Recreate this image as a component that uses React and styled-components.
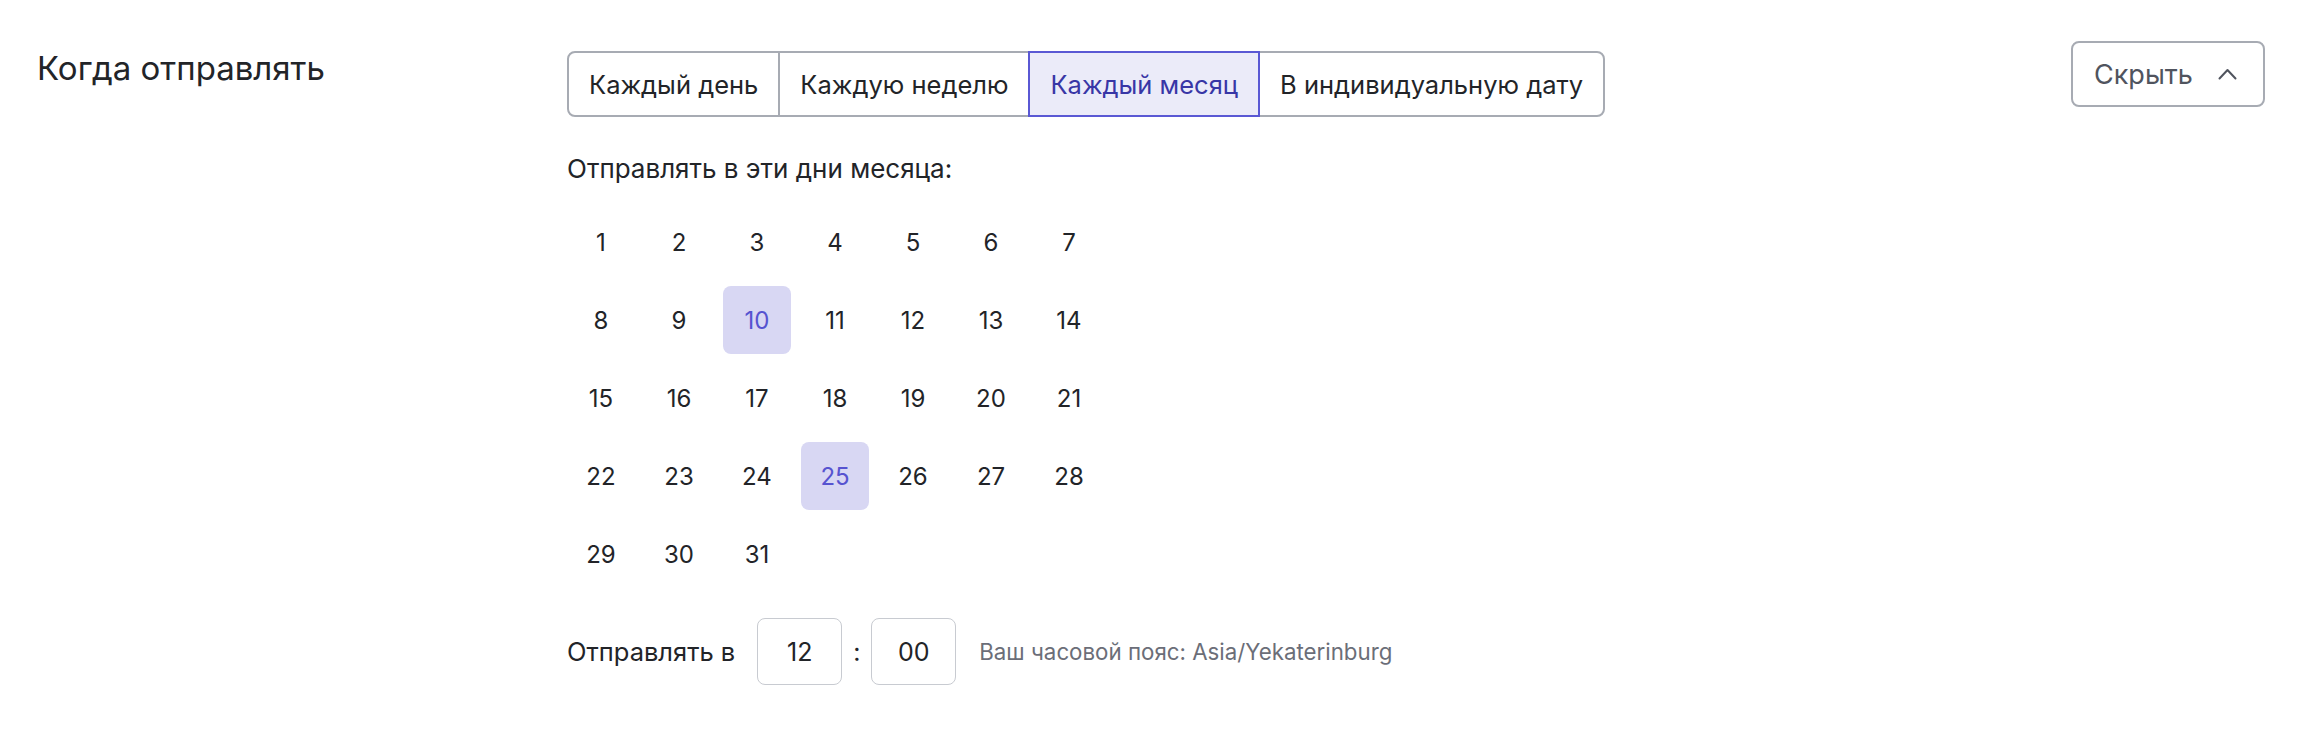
import React, { useState } from "react";
import styled, { createGlobalStyle } from "styled-components";

const GlobalStyle = createGlobalStyle`
  html, body {
    margin: 0;
    padding: 0;
    background: #ffffff;
  }
  body {
    font-family: Inter, "Noto Sans", "Liberation Sans", sans-serif;
    color: #212226;
  }
  * { box-sizing: border-box; }
`;

const Page = styled.div`
  display: flex;
  align-items: flex-start;
  padding: 41px 39px 40px 37px;
  width: 2304px;
`;

const SectionTitle = styled.div`
  width: 530px;
  flex: none;
  margin-top: 9px;
  font-size: 33px;
  line-height: 36px;
  font-weight: 400;
  color: #222428;
`;

const Content = styled.div`
  flex: 1;
  margin-top: 10px;
  display: flex;
  flex-direction: column;
  align-items: flex-start;
`;

const Segmented = styled.div`
  display: flex;
  height: 66px;
`;

const Segment = styled.button`
  position: relative;
  z-index: ${(p) => (p.$active ? 1 : 0)};
  height: 100%;
  margin-left: ${(p) => (p.$first ? "0" : "-2px")};
  padding: 0 20px;
  border: 2px solid ${(p) => (p.$active ? "#5a58d4" : "#a7abb3")};
  border-radius: ${(p) =>
    p.$first ? "8px 0 0 8px" : p.$last ? "0 8px 8px 0" : "0"};
  background: ${(p) => (p.$active ? "#ebebf9" : "#ffffff")};
  color: ${(p) => (p.$active ? "#3836a6" : "#222428")};
  font-family: inherit;
  font-size: 25.5px;
  white-space: nowrap;
  cursor: pointer;
`;

const HintLabel = styled.div`
  margin-top: 34px;
  font-size: 26px;
  line-height: 36px;
  color: #222428;
`;

const DayGrid = styled.div`
  margin-top: 21px;
  display: grid;
  grid-template-columns: repeat(7, 68px);
  grid-auto-rows: 68px;
  gap: 10px;
`;

const Day = styled.div`
  display: flex;
  align-items: center;
  justify-content: center;
  border-radius: 8px;
  font-size: 24px;
  background: ${(p) => (p.$selected ? "#d8d7f3" : "transparent")};
  color: ${(p) => (p.$selected ? "#5653d0" : "#222428")};
  cursor: pointer;
`;

const TimeRow = styled.div`
  margin-top: 30px;
  display: flex;
  align-items: center;
`;

const TimeLabel = styled.span`
  font-size: 25.5px;
  color: #222428;
  margin-right: 22px;
`;

const TimeInput = styled.div`
  width: 85px;
  height: 67px;
  border: 1.5px solid #c8cbd1;
  border-radius: 8px;
  display: flex;
  align-items: center;
  justify-content: center;
  font-size: 25px;
  color: #222428;
`;

const Colon = styled.span`
  width: 29px;
  text-align: center;
  font-size: 25px;
  color: #222428;
`;

const Timezone = styled.span`
  margin-left: 23px;
  font-size: 22.3px;
  color: #6b6e78;
`;

const HideButton = styled.button`
  flex: none;
  width: 194px;
  height: 66px;
  display: flex;
  align-items: center;
  justify-content: space-between;
  padding: 0 26px 0 21px;
  border: 2px solid #a7abb3;
  border-radius: 8px;
  background: #ffffff;
  color: #50545e;
  font-family: inherit;
  font-size: 27px;
  cursor: pointer;
`;

const Chevron = () => (
  <svg width="19" height="12" viewBox="0 0 19 12" fill="none">
    <path d="M1.5 10.5 L9.5 2 L17.5 10.5" stroke="#50545e" strokeWidth="2" strokeLinecap="round" strokeLinejoin="round" />
  </svg>
);

const modes = ["Каждый день", "Каждую неделю", "Каждый месяц", "В индивидуальную дату"];

export default function App() {
  const [mode, setMode] = useState(2);
  const [days, setDays] = useState([10, 25]);
  const toggle = (d) =>
    setDays((prev) => (prev.includes(d) ? prev.filter((x) => x !== d) : [...prev, d]));

  return (
    <>
      <GlobalStyle />
      <Page>
        <SectionTitle>Когда отправлять</SectionTitle>
        <Content>
          <Segmented>
            {modes.map((m, i) => (
              <Segment
                key={m}
                $first={i === 0}
                $last={i === modes.length - 1}
                $active={i === mode}
                onClick={() => setMode(i)}
              >
                {m}
              </Segment>
            ))}
          </Segmented>
          <HintLabel>Отправлять в эти дни месяца:</HintLabel>
          <DayGrid>
            {Array.from({ length: 31 }, (_, i) => i + 1).map((d) => (
              <Day key={d} $selected={days.includes(d)} onClick={() => toggle(d)}>
                {d}
              </Day>
            ))}
          </DayGrid>
          <TimeRow>
            <TimeLabel>Отправлять в</TimeLabel>
            <TimeInput>12</TimeInput>
            <Colon>:</Colon>
            <TimeInput>00</TimeInput>
            <Timezone>Ваш часовой пояс: Asia/Yekaterinburg</Timezone>
          </TimeRow>
        </Content>
        <HideButton>
          Скрыть
          <Chevron />
        </HideButton>
      </Page>
    </>
  );
}
